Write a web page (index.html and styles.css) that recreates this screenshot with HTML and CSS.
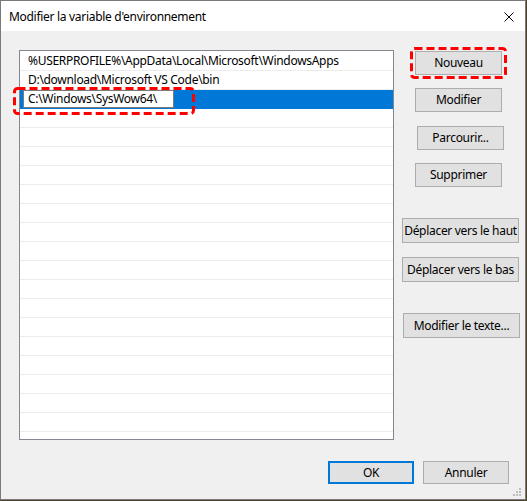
FILE: index.html
```html
<!DOCTYPE html>
<html lang="fr">
<head>
<meta charset="utf-8">
<title>Modifier la variable d'environnement</title>
<link rel="stylesheet" href="styles.css">
</head>
<body>
<div class="window">
  <div class="titlebar">
    <span class="title">Modifier la variable d'environnement</span>
    <svg class="close" width="10" height="10" viewBox="0 0 10 10"><path d="M0.5 0.5L9.5 9.5M9.5 0.5L0.5 9.5" stroke="#000" stroke-width="1" fill="none"/></svg>
  </div>
  <div class="content">
    <div class="main">
      <div class="list">
        <div class="row">%USERPROFILE%\AppData\Local\Microsoft\WindowsApps</div>
        <div class="row">D:\download\Microsoft VS Code\bin</div>
        <div class="row selected"><span class="edit">C:\Windows\SysWow64\</span></div>
        <div class="row"></div><div class="row"></div><div class="row"></div><div class="row"></div>
        <div class="row"></div><div class="row"></div><div class="row"></div><div class="row"></div>
        <div class="row"></div><div class="row"></div><div class="row"></div><div class="row"></div>
        <div class="row"></div><div class="row"></div><div class="row"></div><div class="row"></div>
        <div class="row"></div><div class="row"></div>
      </div>
      <div class="side">
        <button class="btn b-nouveau">Nouveau</button>
        <button class="btn b-modifier">Modifier</button>
        <button class="btn b-parcourir">Parcourir...</button>
        <button class="btn b-supprimer">Supprimer</button>
        <button class="btn wide b-haut">Déplacer vers le haut</button>
        <button class="btn wide b-bas">Déplacer vers le bas</button>
        <button class="btn wide b-texte">Modifier le texte...</button>
      </div>
    </div>
    <div class="footer">
      <button class="btn default">OK</button>
      <button class="btn">Annuler</button>
    </div>
  </div>
  <svg class="grip" width="12" height="10" viewBox="0 0 12 10">
    <rect x="9" y="0" width="2" height="2" fill="#bcbcbc"/>
    <rect x="6" y="3" width="2" height="2" fill="#bcbcbc"/>
    <rect x="9" y="3" width="2" height="2" fill="#bcbcbc"/>
    <rect x="3" y="6" width="2" height="2" fill="#bcbcbc"/>
    <rect x="6" y="6" width="2" height="2" fill="#bcbcbc"/>
    <rect x="9" y="6" width="2" height="2" fill="#bcbcbc"/>
  </svg>
  <svg class="mark mark-edit" width="182" height="28" viewBox="0 0 182 28"><rect x="1.5" y="1.5" width="179" height="25" rx="3" ry="3" fill="none" stroke="#ff0000" stroke-width="3" stroke-dasharray="8 4"/></svg>
  <svg class="mark mark-new" width="97" height="32" viewBox="0 0 97 32"><rect x="1.5" y="1.5" width="94" height="29" rx="3" ry="3" fill="none" stroke="#ff0000" stroke-width="3" stroke-dasharray="8 4"/></svg>
</div>
</body>
</html>
```

FILE: styles.css
```css
html, body {
  margin: 0;
  padding: 0;
  background: #4b4330;
  width: 527px;
  height: 501px;
  overflow: hidden;
}

.window {
  position: relative;
  width: 526px;
  height: 500px;
  box-sizing: border-box;
  border: 1px solid #7a7a7a;
  background: #f0f0f0;
  font-family: "Segoe UI", "Noto Sans", sans-serif;
  font-size: 12px;
  letter-spacing: -0.3px;
  color: #000;
}

.titlebar {
  height: 30px;
  background: #fff;
  display: flex;
  align-items: center;
  justify-content: space-between;
  padding: 0 11px 0 8px;
}

.title {
  font-size: 12px;
  line-height: 16px;
  margin-top: 1px;
}

.close {
  display: block;
  margin-top: 1px;
}

.content {
  display: flex;
  flex-direction: column;
  padding: 19px 0 0 18px;
}

.main {
  display: flex;
}

.list {
  width: 375px;
  height: 390px;
  box-sizing: border-box;
  border: 1px solid #828790;
  background: #fff;
  padding-top: 1px;
  overflow: hidden;
}

.row {
  height: 19px;
  box-sizing: border-box;
  border-bottom: 1px solid #ececec;
  padding-left: 8px;
  line-height: 18px;
  white-space: nowrap;
}

.row.selected {
  background: #0078d7;
  border-bottom-color: #0078d7;
  padding-left: 3px;
  padding-top: 0;
}

.edit {
  display: block;
  width: 151px;
  height: 18px;
  box-sizing: border-box;
  background: #fff;
  border: 1px solid #7a7a7a;
  padding-left: 4px;
  line-height: 16px;
}

.side {
  display: flex;
  flex-direction: column;
  align-items: flex-start;
  margin-left: 6px;
  width: 120px;
}

.btn {
  font-family: inherit;
  font-size: 12px;
  letter-spacing: -0.3px;
  color: #000;
  background: #e1e1e1;
  border: 1px solid #adadad;
  box-sizing: border-box;
  width: 87px;
  height: 24px;
  padding: 0;
  margin: 0;
  line-height: 20px;
  white-space: nowrap;
}

.btn.wide {
  width: 117px;
  height: 25px;
}

.b-nouveau { margin: 1px 0 0 15px; }
.b-modifier { margin: 13px 0 0 15px; }
.b-parcourir { margin: 14px 0 0 17px; }
.b-supprimer { margin: 13px 0 0 15px; }
.b-haut { margin: 31px 0 0 2px; }
.b-bas { margin: 14px 0 0 2px; }
.b-texte { margin: 31px 0 0 3px; width: 115px; }

.footer {
  display: flex;
  justify-content: flex-end;
  gap: 9px;
  margin-top: 21px;
  padding-right: 16px;
}

.footer .btn {
  width: 86px;
  height: 23px;
}

.btn.default {
  border: 2px solid #0078d7;
}

.grip {
  position: absolute;
  right: 3px;
  bottom: 1px;
}

.mark {
  position: absolute;
  display: block;
}

.mark-edit {
  left: 12px;
  top: 86px;
}

.mark-new {
  left: 409px;
  top: 46px;
}
```
